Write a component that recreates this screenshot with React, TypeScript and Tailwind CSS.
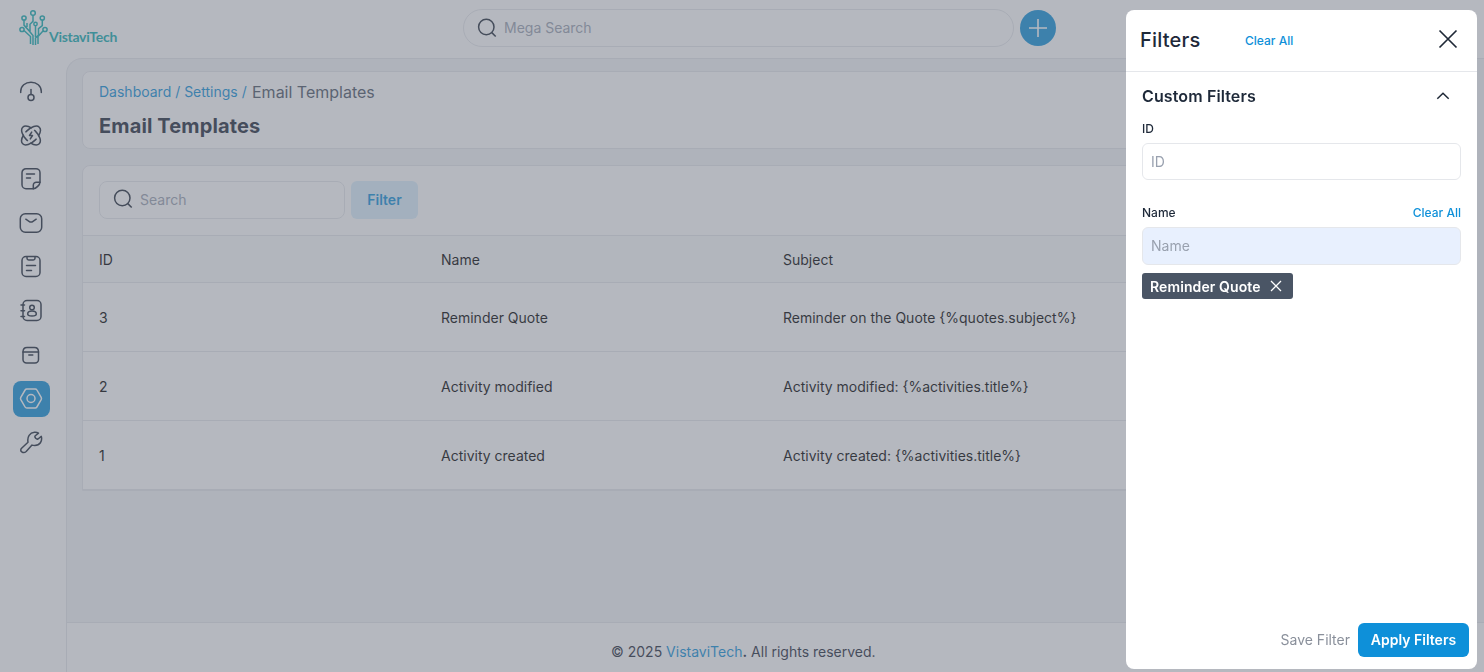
import React from "react";

type IconProps = { children: React.ReactNode; className?: string };

function Icon({ children, className = "" }: IconProps) {
  return (
    <svg
      viewBox="0 0 24 24"
      width="24"
      height="24"
      fill="none"
      stroke="currentColor"
      strokeWidth="1.500"
      strokeLinecap="round"
      strokeLinejoin="round"
      className={className}
    >
      {children}
    </svg>
  );
}

const navIcons: { name: string; active?: boolean; art: React.ReactNode }[] = [
  {
    name: "Dashboard",
    art: (
      <>
        <path d="M1.700 13.500v-1C1.700 7 6.300 3.200 12 3.200S22.300 7 22.300 12.500v1" />
        <path d="M12 10.500v5" />
        <circle cx="12" cy="18.500" r="3" />
      </>
    ),
  },
  {
    name: "Leads",
    art: (
      <>
        <ellipse
          cx="12"
          cy="12.500"
          rx="11.700"
          ry="6.200"
          transform="rotate(45 12 12.500)"
          pathLength="100"
          strokeDasharray="17 5 45 5 28"
          strokeLinecap="butt"
        />
        <ellipse
          cx="12"
          cy="12.500"
          rx="11.700"
          ry="6.200"
          transform="rotate(135 12 12.500)"
          pathLength="100"
          strokeDasharray="17 5 45 5 28"
          strokeLinecap="butt"
        />
        <path d="m12.700 9.100-2.200 3.400h3l-2.200 3.400" />
      </>
    ),
  },
  {
    name: "Quotes",
    art: (
      <>
        <path d="M14.500 21.700H7a4 4 0 0 1-4-4V5.700a4 4 0 0 1 4-4h10a4 4 0 0 1 4 4v9.500c0 2.500-4 6.500-6.500 6.500Z" />
        <path d="M14.300 21.700v-3.500a3 3 0 0 1 3-3H21M7.500 7h8M7.500 11h4" />
      </>
    ),
  },
  {
    name: "Mail",
    art: (
      <>
        <rect x="1.300" y="2.800" width="21.400" height="18.400" rx="5" />
        <path d="m6.800 8.200 3.200 2.100c1.300.9 2.700.9 4 0l3.200-2.100" />
      </>
    ),
  },
  {
    name: "Activities",
    art: (
      <>
        <rect x="3" y="1.500" width="18" height="20" rx="4" />
        <path d="M8 2v1.300C8 4.500 8.700 5 9.700 5h4.600c1 0 1.700-.5 1.700-1.700V2M7.500 10.500h9M7.500 15.500h5" />
      </>
    ),
  },
  {
    name: "Contacts",
    art: (
      <>
        <rect x="4" y="1.500" width="18" height="20" rx="4" />
        <circle cx="13" cy="8.500" r="2.300" />
        <path d="M8.700 15c0-2 2-3 4.300-3s4.300 1 4.300 3-2 2-4.300 2-4.300 0-4.300-2ZM2 6h3.500M2 11.800h3.500M2 17.500h3.500" />
      </>
    ),
  },
  {
    name: "Products",
    art: (
      <>
        <path d="M4 9v7.500A3.500 3.500 0 0 0 7.500 20h8.500a3.500 3.500 0 0 0 3.500-3.500V9c0-2.500-1.500-4.500-4-4.500H8C5.500 4.500 4 6.500 4 9Z" />
        <path d="M4 9h15.500M9.800 12h4" />
      </>
    ),
  },
  {
    name: "Settings",
    active: true,
    art: (
      <>
        <path d="M7.800 2h8.400c.8 0 1.300.3 1.700 1l4.300 7.300c.4.800.4 1.600 0 2.400L17.900 20c-.4.700-.9 1-1.700 1H7.800c-.8 0-1.300-.3-1.700-1l-4.300-7.300c-.4-.8-.4-1.600 0-2.400L6.100 3c.4-.7.900-1 1.700-1Z" />
        <circle cx="12" cy="11.500" r="4" />
      </>
    ),
  },
  {
    name: "Configuration",
    art: (
      <path d="M2.600 17.300 9 11.200C8 5.800 10.800 1.700 15.500 1.300c1.500-.1 3 .2 4 .8L16 5c-.5 1.600 1.300 3.600 3 3l3.300-2.600c1.300 5-1.500 9-6.500 9.100-1 0-2-.1-2.800-.4l-5.800 6.400c-3 2.500-7.200-.5-4.600-3.200Z" />
    ),
  },
];

function SearchIcon() {
  return (
    <svg width="24" height="24" viewBox="0 0 24 24" fill="none" stroke="#1f2937" strokeWidth="1.500" className="shrink-0">
      <circle cx="11.300" cy="11" r="7.700" />
      <path d="m16.800 16.600 3.900 3.900" />
    </svg>
  );
}

function Logo() {
  return (
    <div className="flex h-[38px] w-[100px]">
      <svg width="29" height="38" viewBox="0 0 29 38" fill="none" stroke="#12acb0" strokeWidth="1.500" className="shrink-0">
        <circle cx="14" cy="4" r="2.300" />
        <circle cx="5" cy="9" r="2.100" />
        <circle cx="23.300" cy="9" r="2.100" />
        <circle cx="3" cy="20.500" r="2.100" />
        <circle cx="26" cy="20.500" r="2.100" />
        <circle cx="16.500" cy="15" r="1.700" />
        <path d="M14 6.300v6l-3 3V23l3 3.500V36M5 11.100v5l7 8M23.300 11.100v5.500l-3.800 3V26l-3 3v7M5 21.500l6.500 6V35M24.200 21.800 19 27.500V35M16.500 17v11M8 14v4" />
      </svg>
      <span className="mt-[19px] ml-px whitespace-nowrap font-['Lato',sans-serif] text-[14px] leading-[18px] font-bold tracking-[-0.300px] text-[#12acb0]">
        VistaviTech
      </span>
    </div>
  );
}

const rows = [
  { id: "3", name: "Reminder Quote", subject: "Reminder on the Quote {%quotes.subject%}" },
  { id: "2", name: "Activity modified", subject: "Activity modified: {%activities.title%}" },
  { id: "1", name: "Activity created", subject: "Activity created: {%activities.title%}" },
];

function Header() {
  return (
    <header className="flex h-[58px] shrink-0 items-start bg-white pt-[9px] pl-[19px]">
      <Logo />
      <div className="ml-[344px] flex h-[38px] w-[551px] items-center rounded-full border border-gray-200 pl-[11px]">
        <SearchIcon />
        <span className="mb-px ml-[5px] text-[14px] text-gray-400">Mega Search</span>
      </div>
      <button className="mt-px ml-[6px] flex size-9 items-center justify-center rounded-full bg-[#0e90d9] text-white">
        <svg width="20" height="20" viewBox="0 0 20 20" stroke="currentColor" strokeWidth="1.600">
          <path d="M10 1v18M1 10h18" />
        </svg>
      </button>
    </header>
  );
}

function Sidebar() {
  return (
    <nav className="flex w-[66px] shrink-0 flex-col gap-2 bg-white pt-[15px] pl-[13px]">
      {navIcons.map((item) => (
        <a
          key={item.name}
          aria-label={item.name}
          className={
            item.active
              ? "flex h-9 w-[37px] items-center rounded-lg bg-[#0e90d9] pl-1.5 text-white"
              : "flex h-9 w-[37px] items-center rounded-lg pl-1.5 text-gray-800"
          }
        >
          <Icon>{item.art}</Icon>
        </a>
      ))}
    </nav>
  );
}

function Content() {
  return (
    <div className="flex min-w-0 flex-1 flex-col overflow-hidden rounded-tl-2xl border-t border-l border-gray-200 bg-gray-100">
      <main className="flex flex-1 flex-col gap-4 pt-3 pr-4 pl-[15px]">
        <section className="h-[78px] rounded-lg border border-gray-200 bg-white px-4">
          <div className="mt-2 flex h-6 items-center text-[14px] text-[#0e90d9]">
            <span className="w-[153px] pb-px whitespace-pre">Dashboard / Settings / </span>
            <span className="text-[16px] text-gray-600">Email Templates</span>
          </div>
          <h1 className="mt-2 text-[20px] leading-7 font-bold tracking-[0.130px] text-gray-800">Email Templates</h1>
        </section>
        <section className="h-[326px] overflow-hidden rounded-t-lg border border-gray-200 bg-white">
          <div className="flex h-[69px] items-start gap-1.5 px-4 pt-[15px]">
            <div className="flex h-[38px] w-[246px] items-center rounded-lg border border-gray-200 pb-0.5 pl-[11px]">
              <SearchIcon />
              <span className="ml-[5px] text-[14px] text-gray-400">Search</span>
            </div>
            <button className="h-[38px] w-[67px] rounded-md bg-[#daeffd] pb-0.5 text-[14px] font-semibold text-[#0e90d9]">
              Filter
            </button>
          </div>
          <div className="grid h-12 grid-cols-[342px_342px_1fr] items-center border-y border-gray-200 bg-gray-50 px-4 text-[14px] text-black">
            <span>ID</span>
            <span>Name</span>
            <span>Subject</span>
          </div>
          {rows.map((row) => (
            <div
              key={row.id}
              className="grid h-[69px] grid-cols-[342px_342px_1fr] items-center border-b border-gray-200 px-4 text-[14px] text-black"
            >
              <span>{row.id}</span>
              <span>{row.name}</span>
              <span>{row.subject}</span>
            </div>
          ))}
        </section>
      </main>
      <footer className="flex h-[50px] shrink-0 items-center border-t border-gray-200 bg-white pt-[7px] pl-[544px] text-[14px] text-gray-800">
        <p className="whitespace-nowrap">
          © 2025 <span className="text-[#0e90d9]">VistaviTech</span>
          <b>.</b> All rights reserved.
        </p>
      </footer>
    </div>
  );
}

function FilterDrawer() {
  return (
    <div className="fixed inset-0 flex justify-end bg-[#6b7280]/50 pt-[10px] pr-[7px] pb-[3px]">
      <aside className="flex w-[351px] flex-col rounded-lg bg-white">
        <div className="flex h-[62px] items-center border-b border-gray-200 pl-[14px]">
          <h2 className="mb-0.5 w-[105px] text-[20px] font-medium tracking-[0.200px] text-gray-800">Filters</h2>
          <a className="text-[12px] font-medium text-[#0e90d9]">Clear All</a>
          <svg width="20" height="20" viewBox="0 0 20 20" stroke="#1f2937" strokeWidth="1.700" className="mr-[19px] mb-1 ml-auto">
            <path d="M1.500 1.500l17 17m0-17-17 17" />
          </svg>
        </div>
        <div className="flex flex-1 flex-col px-4">
          <div className="flex h-[48px] items-center justify-between pr-[11px]">
            <h3 className="text-[16px] font-semibold tracking-[0.120px] text-gray-800">Custom Filters</h3>
            <svg width="14" height="8" viewBox="0 0 14 8" fill="none" stroke="#1f2937" strokeWidth="1.500">
              <path d="m1.300 6.800 5.700-5.500 5.700 5.500" />
            </svg>
          </div>
          <label className="h-[23px] text-[12px] leading-[18px] font-medium text-gray-800">ID</label>
          <div className="flex h-[37px] items-center rounded-md border border-gray-200 px-2 text-[14px] text-gray-400">ID</div>
          <div className="mt-6 flex h-[23px] justify-between text-[12px] leading-[18px] font-medium text-gray-800">
            <span>Name</span>
            <a className="text-[#0e90d9]">Clear All</a>
          </div>
          <div className="flex h-[38px] items-center rounded-md border border-gray-200 bg-[#e8f0fe] px-2 pb-0.5 text-[14px] text-gray-400">
            Name
          </div>
          <div className="mt-2 flex h-[26px] w-[151px] items-center rounded-[3px] bg-gray-600 pt-px pl-2 text-[14px] font-semibold text-white">
            <span className="whitespace-nowrap tracking-[0.100px]">Reminder Quote</span>
            <svg width="12" height="12" viewBox="0 0 12 12" stroke="currentColor" strokeWidth="1.300" className="mr-[11px] mb-px ml-auto">
              <path d="m1 1 10 10m0-10L1 11" />
            </svg>
          </div>
        </div>
        <div className="flex h-[58px] items-center justify-end gap-2 pr-2">
          <button className="pb-0.5 text-[14px] text-[#8a909b]">Save Filter</button>
          <button className="h-[34px] w-[111px] rounded-md bg-[#0e90d9] pb-0.5 text-[14px] font-semibold text-white">
            Apply Filters
          </button>
        </div>
      </aside>
    </div>
  );
}

export default function App() {
  return (
    <div className="flex h-screen flex-col overflow-hidden bg-white font-['Inter',sans-serif]">
      <Header />
      <div className="flex min-h-0 flex-1">
        <Sidebar />
        <Content />
      </div>
      <FilterDrawer />
    </div>
  );
}
